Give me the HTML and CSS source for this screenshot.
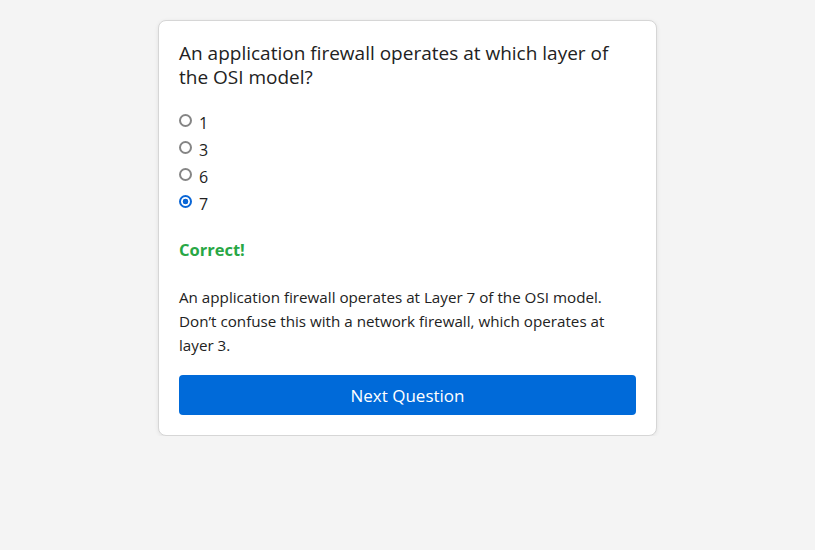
FILE: index.html
```html
<!DOCTYPE html>
<html lang="en">
<head>
<meta charset="utf-8">
<title>Quiz</title>
<link rel="stylesheet" href="styles.css">
</head>
<body>
<div class="card">
  <h2 class="question">An application firewall operates at which layer of the OSI model?</h2>
  <div class="options">
    <label class="option"><input type="radio" name="q"><span>1</span></label>
    <label class="option"><input type="radio" name="q"><span>3</span></label>
    <label class="option"><input type="radio" name="q"><span>6</span></label>
    <label class="option"><input type="radio" name="q" checked><span>7</span></label>
  </div>
  <p class="result">Correct!</p>
  <p class="explanation">An application firewall operates at Layer 7 of the OSI model. Don’t confuse this with a network firewall, which operates at layer 3.</p>
  <button class="next">Next Question</button>
</div>
</body>
</html>
```

FILE: styles.css
```css
html, body {
  margin: 0;
  padding: 0;
  background: #f4f4f4;
}
body {
  font-family: "Open Sans", "Noto Sans", sans-serif;
  color: #222;
  padding-top: 20px;
}
.card {
  box-sizing: border-box;
  width: 499px;
  margin: 0 auto;
  background: #fff;
  border: 1px solid #d6d6d6;
  border-radius: 8px;
  box-shadow: 0 1px 4px rgba(0,0,0,0.08);
  padding: 20px;
  display: flex;
  flex-direction: column;
}
.question {
  margin: 0;
  font-size: 19px;
  line-height: 24px;
  font-weight: 400;
  color: #222;
}
.options {
  margin-top: 18px;
  display: flex;
  flex-direction: column;
}
.option {
  display: flex;
  align-items: center;
  height: 27px;
  font-size: 16px;
  color: #222;
}
.option input {
  appearance: none;
  -webkit-appearance: none;
  box-sizing: border-box;
  margin: 0 7px 0 0;
  width: 13px;
  height: 13px;
  border: 2px solid #858585;
  border-radius: 50%;
  background: #fff;
  position: relative;
  top: 0;
}
.option input:checked {
  border-color: #0a66d6;
  background: radial-gradient(circle, #0a66d6 0 2.6px, #fff 3.1px);
}
.option span {
  position: relative;
  top: 2px;
}
.result {
  margin: 23px 0 0;
  font-size: 16.5px;
  line-height: 24px;
  font-weight: 700;
  color: #28a745;
}
.explanation {
  margin: 23px 0 0;
  font-size: 15.2px;
  line-height: 24px;
  color: #222;
}
.next {
  margin-top: 18px;
  height: 40px;
  border: none;
  border-radius: 4px;
  background: #006ad9;
  color: #fff;
  font-family: inherit;
  font-size: 17px;
}
```
